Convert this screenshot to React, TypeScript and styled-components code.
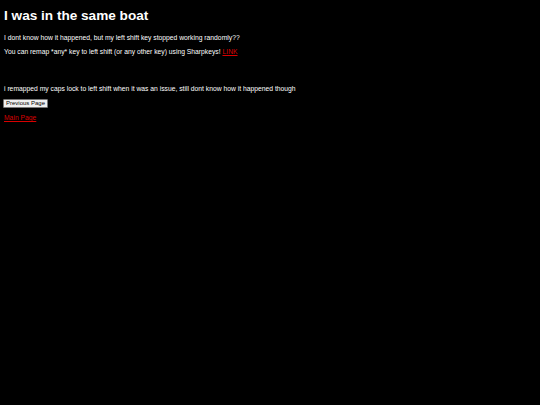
import styled, { createGlobalStyle } from "styled-components"

const GlobalStyle = createGlobalStyle`
    html, body {
        margin: 0;
        padding: 0;
        background: #000;
        color: #fff;
        font-family: "Liberation Sans", Arial, sans-serif;
    }
`

const Page = styled.div`
    padding: 4px 4px;
    display: flex;
    flex-direction: column;
    align-items: flex-start;
`

const Title = styled.h1`
    font-size: 13.6px;
    font-weight: bold;
    line-height: 16px;
    margin: 4px 0 10px 0;
`

const Text = styled.p<{ gapTop?: number }>`
    font-size: 6.75px;
    line-height: 8px;
    margin: ${({ gapTop }) => (gapTop ? `${gapTop}px` : `0`)} 0 6px 0;
`

const RedLink = styled.a`
    color: #d80000;
    text-decoration: underline;
`

const BackButton = styled.button`
    font-family: "Liberation Sans", Arial, sans-serif;
    font-size: 6px;
    line-height: 7px;
    padding: 0 2px;
    margin: 0 0 6px -1px;
    background: #efefef;
    color: #000;
    border: 1px solid #767676;
    border-radius: 1px;
`

const MainLink = styled(RedLink)`
    font-size: 6.75px;
    line-height: 8px;
`

export default function App() {
    return (
        <>
            <GlobalStyle />
            <Page>
                <Title>I was in the same boat</Title>
                <Text>I dont know how it happened, but my left shift key stopped working randomly??</Text>
                <Text>
                    You can remap *any* key to left shift (or any other key) using Sharpkeys! <RedLink href="#">LINK</RedLink>
                </Text>
                <Text gapTop={23}>i remapped my caps lock to left shift when it was an issue, still dont know how it happened though</Text>
                <BackButton>Previous Page</BackButton>
                <MainLink href="#">Main Page</MainLink>
            </Page>
        </>
    )
}
